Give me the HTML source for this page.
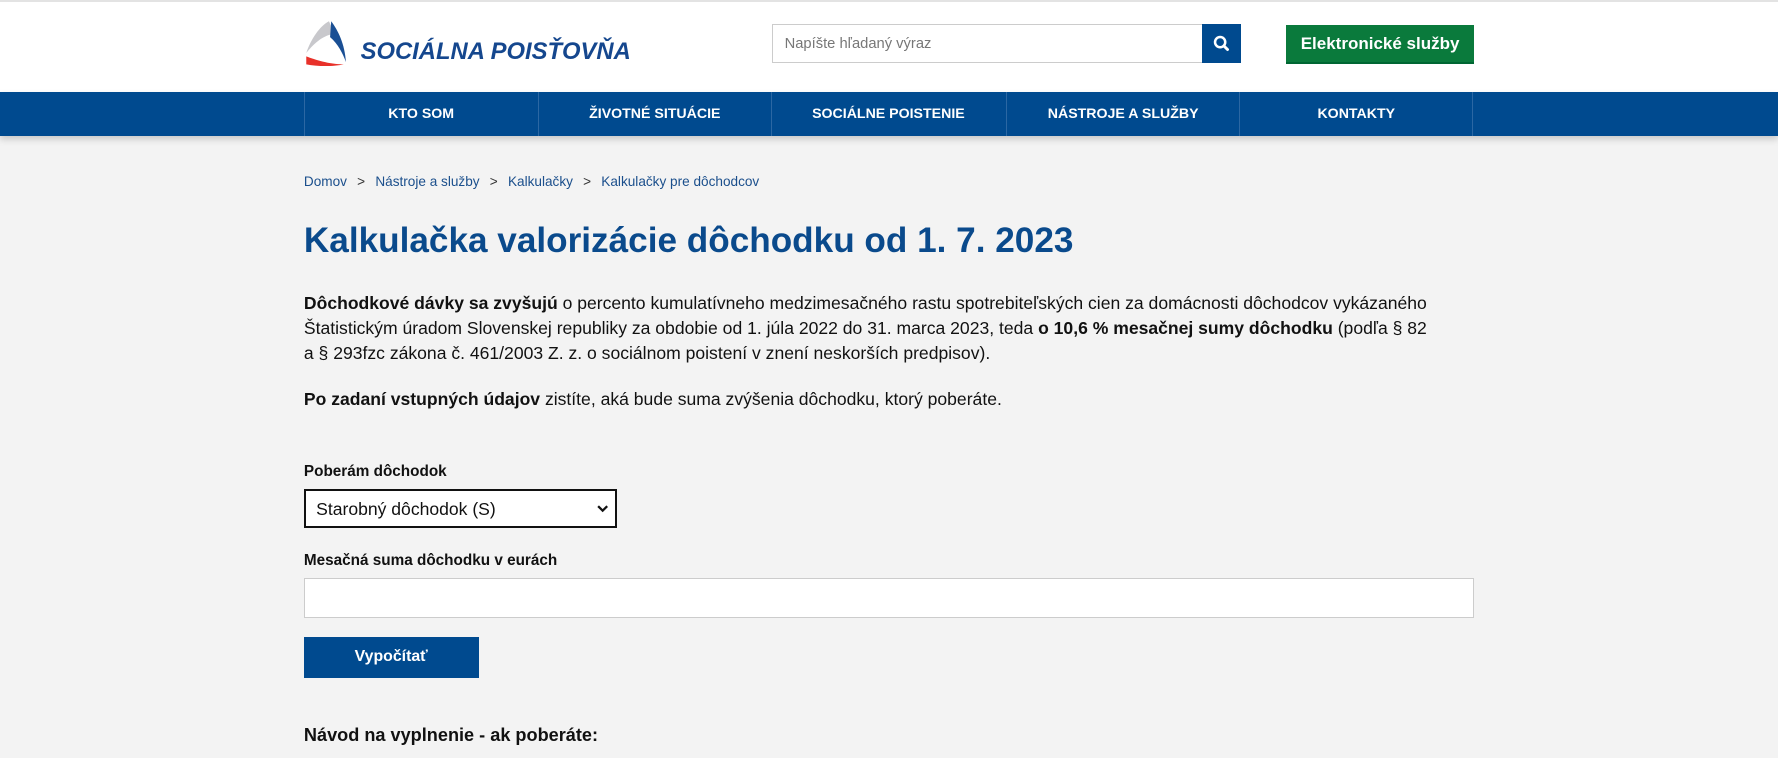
<!DOCTYPE html>
<html><head><meta charset="utf-8"><style>
*{box-sizing:border-box;margin:0;padding:0}
html,body{width:1778px;height:758px;overflow:hidden;background:#f3f3f3}
#w{zoom:1.134;width:1568px;height:669px;position:relative;overflow:hidden;font-family:"Liberation Sans",sans-serif;color:#111}
.top{position:absolute;left:0;top:0;width:1568px;height:81px;background:#fff;border-top:2px solid #e3e3e3}
.nav{position:absolute;left:0;top:81px;width:1568px;height:39px;background:#004a8f;box-shadow:0 3px 6px rgba(0,0,0,.18)}
.nav div{position:absolute;top:0;height:39px;border-left:1px solid #2b67a3;color:#fff;font-weight:bold;font-size:12.5px;text-align:center;line-height:39px;width:206px}
.abs{position:absolute}
.bc{font-size:12px;color:#1b4f8c;top:153px;left:268px}
.bc span{color:#333;margin:0 9px}
h1{position:absolute;left:268px;top:195px;font-size:31px;color:#0a4a8c;font-weight:bold}
p{position:absolute;left:268px;font-size:15.5px;line-height:22px;width:1010px}
label{position:absolute;left:268px;font-size:13.5px;font-weight:bold}
</style></head><body><div id="w">
<div class="top">
<svg class="abs" style="left:268px;top:15px" width="44" height="44" viewBox="0 0 44 44">
<path d="M22 2 C14 6 6 18 2 30 C10 20 18 14 27 13 Z" fill="#c8c8cc"/>
<path d="M24 2 C30 10 36 22 37 38 C34 30 30 22 23 16 Z" fill="#1a4f94"/>
<path d="M2 33 C10 36 22 40 35 40 C26 42 12 42 2 40 Z" fill="#e8312a"/>
</svg>
<div class="abs" style="left:318px;top:32px;font-size:21px;font-weight:bold;font-style:italic;color:#15478e;letter-spacing:0">SOCIÁLNA POISŤOVŇA</div>
<div class="abs" style="left:681px;top:19px;width:380px;height:35px;border:1px solid #ccc;background:#fff;font-size:13px;color:#777;padding:10px 0 0 10px">Napíšte hľadaný výraz</div>
<div class="abs" style="left:1060px;top:19px;width:34px;height:35px;background:#004a8f">
<svg width="34" height="35" viewBox="0 0 34 35"><circle cx="16" cy="16" r="4.5" stroke="#fff" stroke-width="2.2" fill="none"/><line x1="19.3" y1="19.3" x2="22.5" y2="22.5" stroke="#fff" stroke-width="2.6" stroke-linecap="round"/></svg></div>
<div class="abs" style="left:1134px;top:20px;width:166px;height:35px;background:#0a7a3c;border-bottom:2px solid #063;color:#fff;font-weight:bold;font-size:15px;text-align:center;line-height:34px">Elektronické služby</div>
</div>
<div class="nav">
<div style="left:268px">KTO SOM</div>
<div style="left:474px">ŽIVOTNÉ SITUÁCIE</div>
<div style="left:680px">SOCIÁLNE POISTENIE</div>
<div style="left:887px">NÁSTROJE A SLUŽBY</div>
<div style="left:1093px;border-right:1px solid #2b67a3">KONTAKTY</div>
</div>
<div class="abs bc">Domov<span>&gt;</span>Nástroje a služby<span>&gt;</span>Kalkulačky<span>&gt;</span>Kalkulačky pre dôchodcov</div>
<h1>Kalkulačka valorizácie dôchodku od 1. 7. 2023</h1>
<p style="top:257px"><b>Dôchodkové dávky sa zvyšujú</b> o percento kumulatívneho medzimesačného rastu spotrebiteľských cien za domácnosti dôchodcov vykázaného Štatistickým úradom Slovenskej republiky za obdobie od 1. júla 2022 do 31. marca 2023, teda <b>o 10,6 % mesačnej sumy dôchodku</b> (podľa § 82<br>a § 293fzc zákona č. 461/2003 Z. z. o sociálnom poistení v znení neskorších predpisov).</p>
<p style="top:341px"><b>Po zadaní vstupných údajov</b> zistíte, aká bude suma zvýšenia dôchodku, ktorý poberáte.</p>
<label style="top:408px">Poberám dôchodok</label>
<div class="abs" style="left:268px;top:431px;width:276px;height:35px;border:2px solid #111;background:#fff;font-size:15.5px;padding:7px 0 0 9px">Starobný dôchodok (S)
<svg class="abs" style="right:6px;top:13px" width="10" height="7" viewBox="0 0 10 7"><path d="M1 1 L5 5 L9 1" stroke="#111" stroke-width="2" fill="none"/></svg></div>
<label style="top:487px">Mesačná suma dôchodku v eurách</label>
<div class="abs" style="left:268px;top:510px;width:1032px;height:35px;border:1px solid #ccc;background:#fff"></div>
<div class="abs" style="left:268px;top:562px;width:154px;height:36px;background:#004a8f;color:#fff;font-weight:bold;font-size:14px;text-align:center;line-height:36px">Vypočítať</div>
<div class="abs" style="left:268px;top:639px;font-size:16px;font-weight:bold">Návod na vyplnenie - ak poberáte:</div>
</div></body></html>
